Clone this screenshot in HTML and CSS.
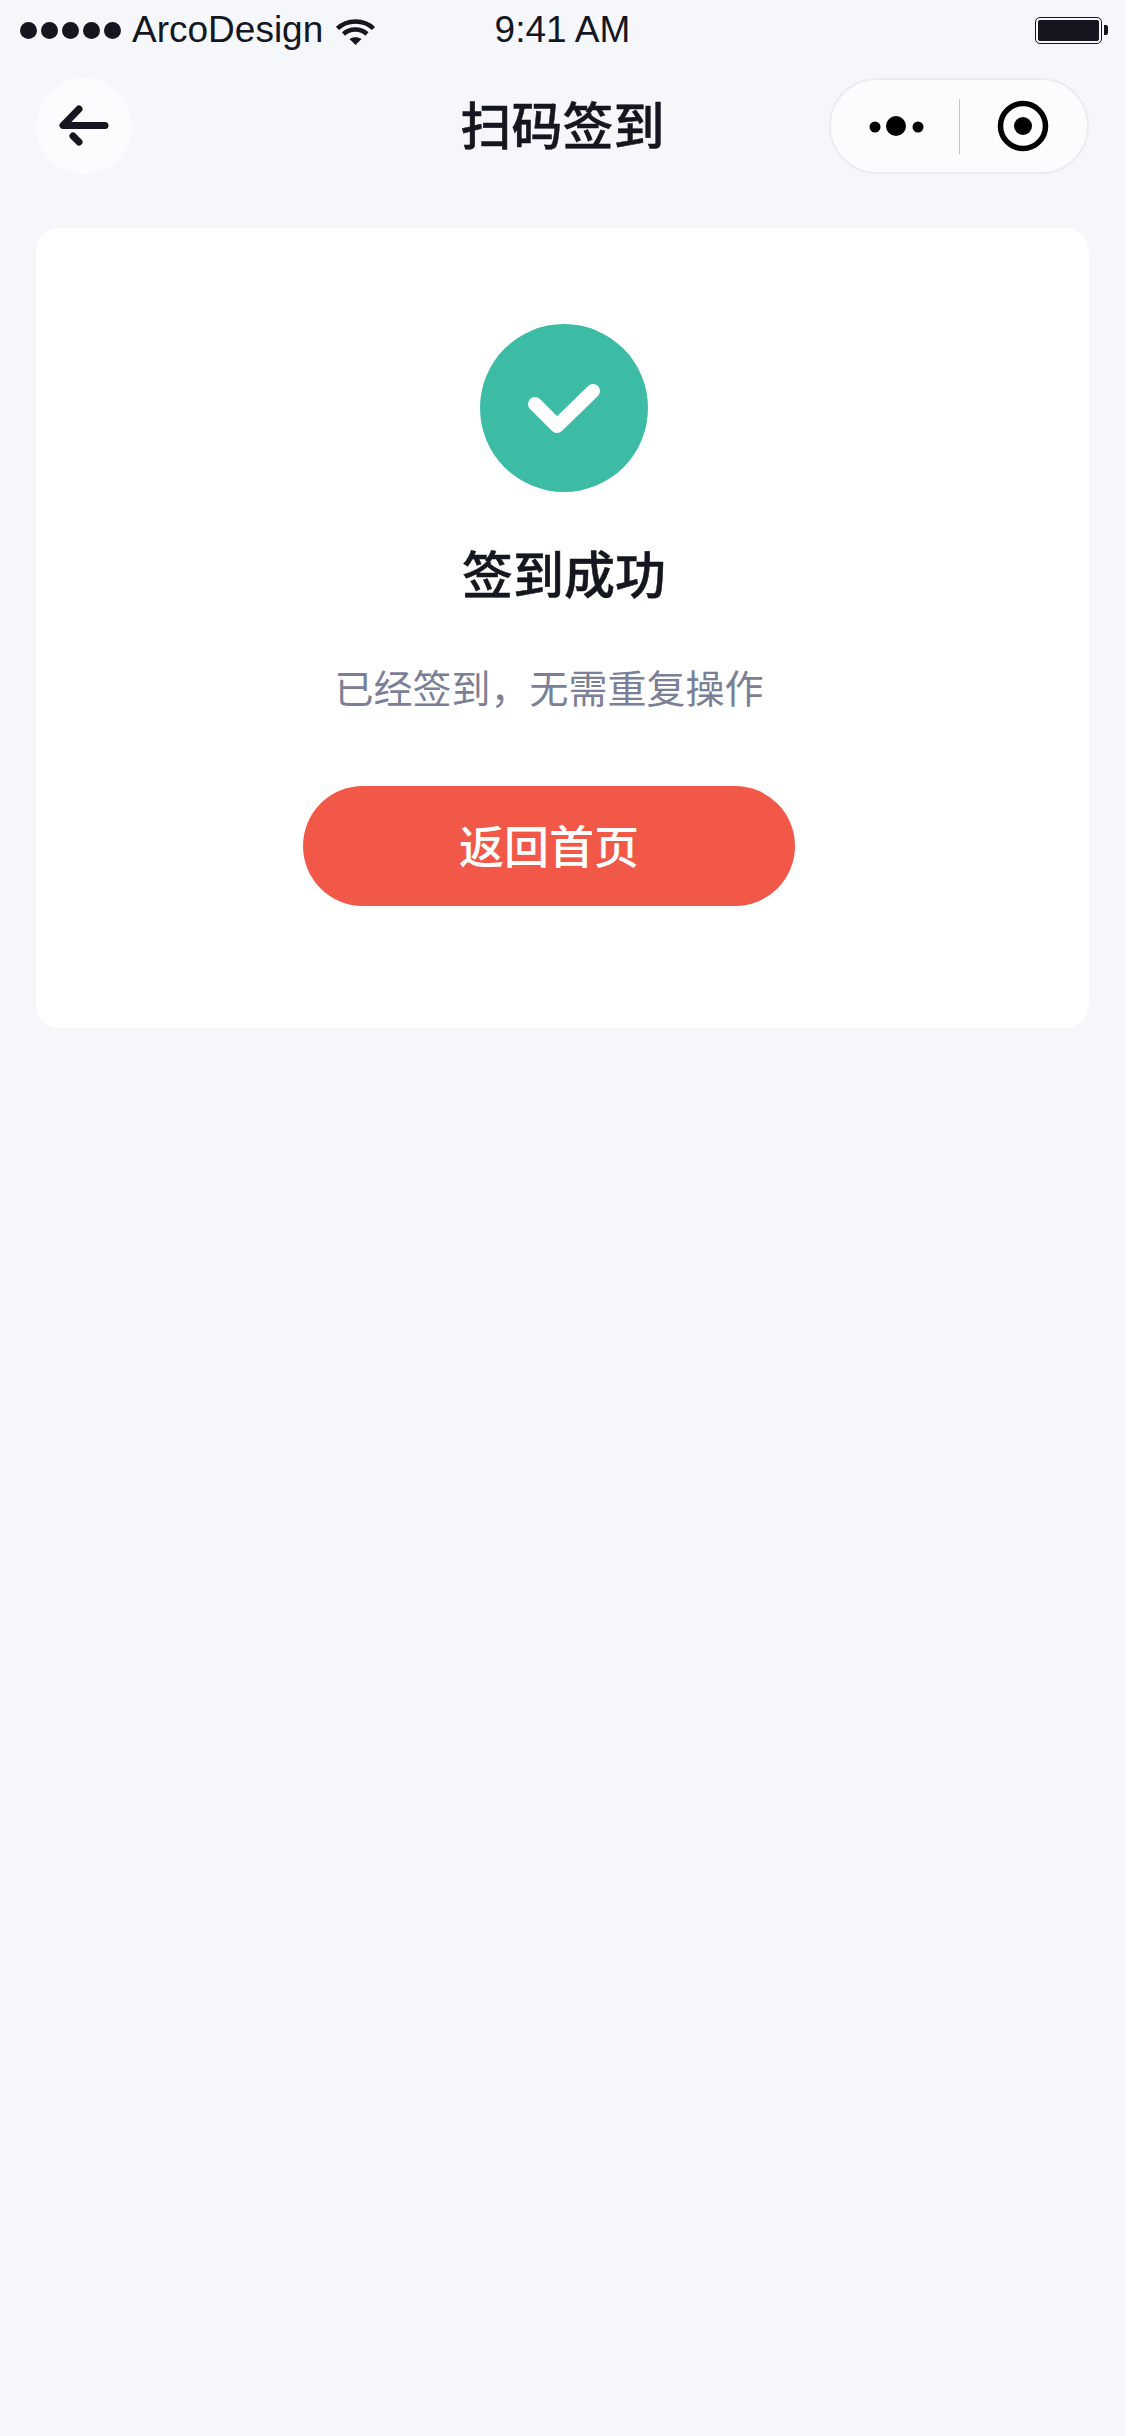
FILE: index.html
```html
<!DOCTYPE html>
<html lang="zh-CN">
<head>
<meta charset="utf-8">
<title>扫码签到</title>
<link rel="stylesheet" href="styles.css">
</head>
<body>
<div class="page">
  <header class="status">
    <div class="status-left">
      <div class="signal"><i></i><i></i><i></i><i></i><i></i></div>
      <span class="carrier">ArcoDesign</span>
      <svg class="wifi" width="40" height="28" viewBox="0 0 40 28">
        <path d="M1.500 10.500C11 1 28 1 37.500 10.500" fill="none" stroke="#14171f" stroke-width="4.500"/>
        <path d="M7.500 16C14 10 24.500 10 31 16" fill="none" stroke="#14171f" stroke-width="4.500"/>
        <path d="M13.500 21C17 18.500 22 18.500 25.500 21L19.500 27Z" fill="#14171f"/>
      </svg>
    </div>
    <span class="time">9:41 AM</span>
    <div class="status-right">
      <div class="battery"><div class="battery-fill"></div></div>
      <div class="battery-nub"></div>
    </div>
  </header>

  <nav class="nav">
    <button class="back" aria-label="返回">
      <svg width="96" height="96" viewBox="0 0 96 96">
        <path d="M43 31L27 47.500H69" fill="none" stroke="#14171f" stroke-width="7" stroke-linecap="round" stroke-linejoin="round"/>
        <path d="M37 58L43 64" fill="none" stroke="#14171f" stroke-width="7" stroke-linecap="round"/>
      </svg>
    </button>
    <h1 class="nav-title">扫码签到</h1>
    <div class="capsule">
      <svg class="capsule-more" width="64" height="24" viewBox="0 0 64 24">
        <circle cx="11" cy="13" r="5.500"/><circle cx="32" cy="12" r="10"/><circle cx="54" cy="13" r="5.500"/>
      </svg>
      <span class="capsule-divider"></span>
      <svg class="capsule-target" width="56" height="56" viewBox="0 0 56 56">
        <circle cx="28" cy="28" r="22.500" fill="none" stroke="#000" stroke-width="5.500"/>
        <circle cx="28" cy="28" r="9"/>
      </svg>
    </div>
  </nav>

  <main class="card">
    <svg class="success-icon" width="168" height="168" viewBox="0 0 168 168">
      <circle cx="84" cy="84" r="84" fill="#3cbca5"/>
      <path d="M55 80L77 102L113 67" fill="none" stroke="#fff" stroke-width="14" stroke-linecap="round" stroke-linejoin="round"/>
    </svg>
    <h2 class="title">签到成功</h2>
    <p class="subtitle">已经签到，无需重复操作</p>
    <button class="home-btn">返回首页</button>
  </main>
</div>
</body>
</html>
```

FILE: styles.css
```css
* { box-sizing: border-box; }

html, body {
  margin: 0;
  padding: 0;
}

body {
  background: #f6f7fb;
  color: #14171f;
  font-family: "Liberation Sans", "Noto Sans CJK SC", sans-serif;
}

.page {
  width: 1125px;
  height: 2436px;
  overflow: hidden;
  display: flex;
  flex-direction: column;
}

/* status bar */
.status {
  height: 60px;
  padding: 0 17px;
  display: grid;
  grid-template-columns: 1fr auto 1fr;
  align-items: center;
}

.status-left {
  display: flex;
  align-items: center;
}

.signal {
  display: flex;
  gap: 4px;
  margin-left: 3px;
}

.signal i {
  width: 17px;
  height: 17px;
  border-radius: 50%;
  background: #14171f;
  display: block;
}

.carrier {
  font-size: 37px;
  line-height: 60px;
  margin-left: 11px;
}

.wifi {
  margin-left: 13px;
  margin-top: 3px;
}

.time {
  font-size: 37px;
  line-height: 60px;
}

.status-right {
  display: flex;
  justify-content: flex-end;
  align-items: center;
}

.battery {
  width: 67px;
  height: 27px;
  padding: 2px;
  border: 1px solid #14171f;
  border-radius: 5px;
}

.battery-fill {
  height: 100%;
  background: #14171f;
  border-radius: 2px;
}

.battery-nub {
  width: 4px;
  height: 10px;
  margin-left: 2px;
  background: #14171f;
  border-radius: 0 2px 2px 0;
}

/* nav bar */
.nav {
  height: 96px;
  margin-top: 18px;
  padding: 0 36px;
  display: grid;
  grid-template-columns: 260px 1fr 260px;
  align-items: center;
}

.back {
  width: 96px;
  height: 96px;
  padding: 0;
  border: 0;
  border-radius: 50%;
  background: #fbfcfd;
  display: block;
}

.back svg {
  display: block;
}

.nav-title {
  margin: 0;
  padding-bottom: 6px;
  text-align: center;
  font-size: 51px;
  line-height: 90px;
  font-weight: 500;
  font-family: "Noto Sans CJK SC", sans-serif;
  -webkit-text-stroke: 0.5px #14171f;
}

.capsule {
  width: 260px;
  height: 96px;
  border: 2px solid #ececef;
  border-radius: 48px;
  background: #fbfcfd;
  display: flex;
  align-items: center;
}

.capsule-more {
  margin-left: 33px;
}

.capsule-divider {
  width: 1px;
  height: 55px;
  margin-left: 31px;
  background: #c4c4c7;
}

.capsule-target {
  margin-left: 35px;
}

/* card */
.card {
  margin: 54px 36px 0;
  height: 800px;
  padding-top: 96px;
  border-radius: 24px;
  background: #fff;
  display: flex;
  flex-direction: column;
  align-items: center;
}

.success-icon {
  display: block;
  flex: none;
  margin-left: 3px;
}

.title {
  margin: 50px 0 0 3px;
  font-size: 51px;
  line-height: 60px;
  font-weight: 500;
  font-family: "Noto Sans CJK SC", sans-serif;
  -webkit-text-stroke: 0.5px #14171f;
}

.subtitle {
  margin: 59px 27px 0 0;
  font-size: 39px;
  line-height: 50px;
  color: #7b8096;
  font-family: "Noto Sans CJK SC", sans-serif;
}

.home-btn {
  align-self: flex-start;
  width: 492px;
  height: 120px;
  margin: 75px 0 0 267px;
  padding: 0 0 3px;
  border: 0;
  border-radius: 60px;
  background: #f25847;
  color: #fff;
  font-size: 45px;
  font-weight: 500;
  font-family: "Noto Sans CJK SC", sans-serif;
}
```
